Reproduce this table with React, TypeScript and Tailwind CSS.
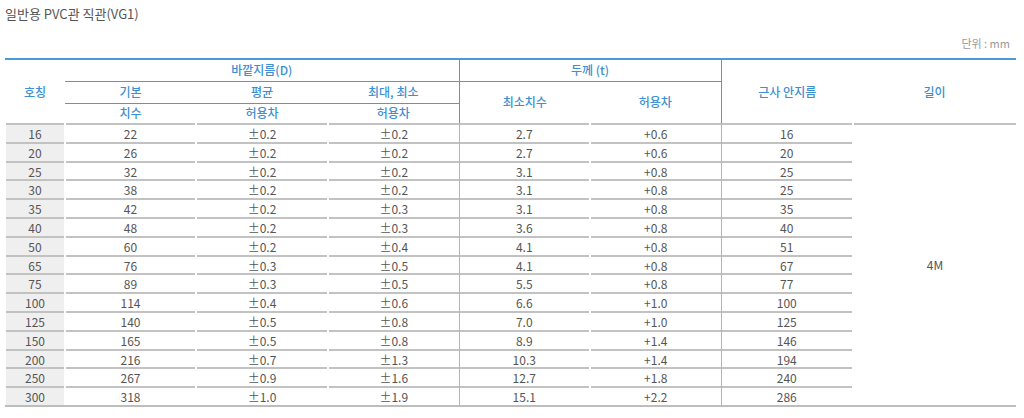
import React from "react";

const rows: string[][] = [
  ["16", "22", "±0.2", "±0.2", "2.7", "+0.6", "16"],
  ["20", "26", "±0.2", "±0.2", "2.7", "+0.6", "20"],
  ["25", "32", "±0.2", "±0.2", "3.1", "+0.8", "25"],
  ["30", "38", "±0.2", "±0.2", "3.1", "+0.8", "25"],
  ["35", "42", "±0.2", "±0.3", "3.1", "+0.8", "35"],
  ["40", "48", "±0.2", "±0.3", "3.6", "+0.8", "40"],
  ["50", "60", "±0.2", "±0.4", "4.1", "+0.8", "51"],
  ["65", "76", "±0.3", "±0.5", "4.1", "+0.8", "67"],
  ["75", "89", "±0.3", "±0.5", "5.5", "+0.8", "77"],
  ["100", "114", "±0.4", "±0.6", "6.6", "+1.0", "100"],
  ["125", "140", "±0.5", "±0.8", "7.0", "+1.0", "125"],
  ["150", "165", "±0.5", "±0.8", "8.9", "+1.4", "146"],
  ["200", "216", "±0.7", "±1.3", "10.3", "+1.4", "194"],
  ["250", "267", "±0.9", "±1.6", "12.7", "+1.8", "240"],
  ["300", "318", "±1.0", "±1.9", "15.1", "+2.2", "286"],
];

const tdPad = [
  "px-[1px]",
  "px-[1px]",
  "px-[1px]",
  "pl-[1px] pr-0",
  "pr-[1px] pl-0 border-l border-l-[#b4b4b4]",
  "pl-[1px] pr-0",
  "pr-[1px] pl-0 border-l border-l-[#b4b4b4]",
];

export default function App() {
  const last = rows.length - 1;
  return (
    <div
      className="w-[1024px] h-[418px] bg-white overflow-hidden"
      style={{ fontFamily: '"Noto Sans CJK KR", "Noto Sans", sans-serif' }}
    >
      <div className="pl-[5px] pt-[4px] text-[13px] leading-[20px] text-[#555]">
        일반용 PVC관 직관(VG1)
      </div>
      <div className="w-[1011px] ml-[5px] mt-[11px] pr-[6px] text-right text-[11px] leading-[16px] text-[#999]">
        단위 : mm
      </div>
      <table className="mt-[7px] ml-[5px] w-[1011px] table-fixed border-collapse text-[12px] text-center">
        <colgroup>
          <col className="w-[60px]" />
          <col className="w-[131px]" />
          <col className="w-[132px]" />
          <col className="w-[131px]" />
          <col className="w-[131px]" />
          <col className="w-[131px]" />
          <col className="w-[132px]" />
          <col className="w-[163px]" />
        </colgroup>
        <thead className="text-[#3d8fd1] font-medium">
          <tr className="h-[22px] border-t-2 border-t-[#4c9ad6]">
            <td rowSpan={3} className="p-0 align-middle">호칭</td>
            <td colSpan={3} className="p-0 border-b border-b-[#4c9ad6]">바깥지름(D)</td>
            <td colSpan={2} className="p-0 border-b border-b-[#4c9ad6] border-l border-l-[#4c9ad6]">두께 (t)</td>
            <td rowSpan={3} className="p-0 align-middle border-l border-l-[#4c9ad6]">근사 안지름</td>
            <td rowSpan={3} className="p-0 align-middle">길이</td>
          </tr>
          <tr className="h-[22px]">
            <td className="p-0 border-b border-b-[#4c9ad6]">기본</td>
            <td className="p-0 border-b border-b-[#4c9ad6]">평균</td>
            <td className="p-0 border-b border-b-[#4c9ad6]">최대, 최소</td>
            <td rowSpan={2} className="p-0 align-middle border-l border-l-[#4c9ad6]">최소치수</td>
            <td rowSpan={2} className="p-0 align-middle">허용차</td>
          </tr>
          <tr className="h-[20px]">
            <td className="p-0">치수</td>
            <td className="p-0">허용차</td>
            <td className="p-0">허용차</td>
          </tr>
        </thead>
        <tbody className="text-[#555]">
          {rows.map((r, i) => (
            <tr key={i}>
              {r.map((c, j) => (
                <td
                  key={j}
                  className={`${tdPad[j]} py-0 ${i === last ? "border-b-2 border-b-[#bdbdbd]" : ""}`}
                >
                  <div
                    className={`h-[18.8px] leading-[17px] border-t-2 border-t-[#c2c2c2] ${j === 0 ? "bg-[#efefef]" : ""}`}
                  >
                    {c}
                  </div>
                </td>
              ))}
              {i === 0 && (
                <td rowSpan={rows.length} className="pl-[1px] pr-0 py-0 align-top border-b-2 border-b-[#bdbdbd]">
                  <div className="h-[282px] flex items-center justify-center border-t-2 border-t-[#c2c2c2]">
                    4M
                  </div>
                </td>
              )}
            </tr>
          ))}
        </tbody>
      </table>
    </div>
  );
}
